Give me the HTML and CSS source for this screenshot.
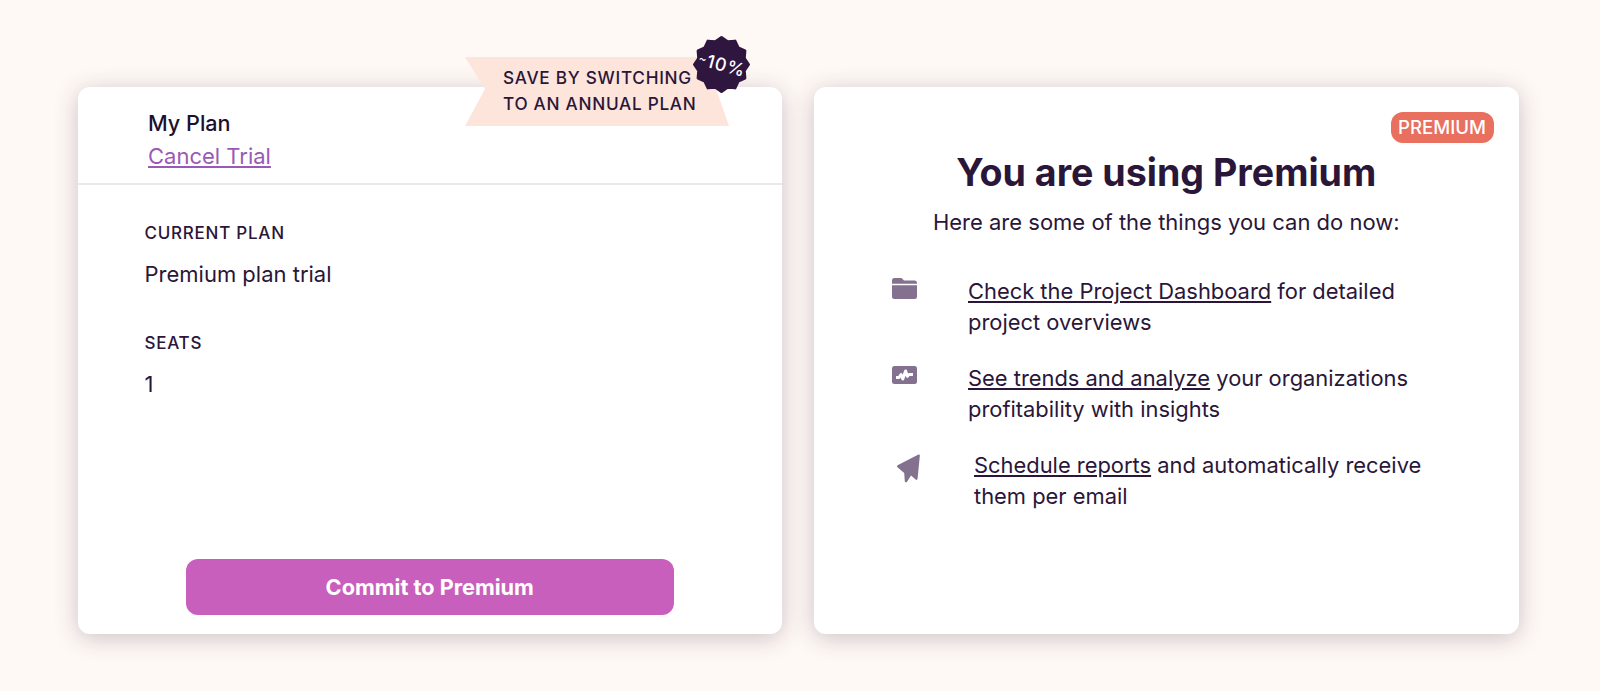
FILE: index.html
```html
<!DOCTYPE html>
<html lang="en">
<head>
<meta charset="utf-8">
<title>Premium plan</title>
<link rel="stylesheet" href="styles.css">
</head>
<body>
<main class="page">
  <section class="card plan">
    <div class="ribbon">
      <svg class="ribbon-bg" viewBox="0 0 264 69" aria-hidden="true"><polygon points="0,0 240,0 264,69 0,69 20,32"/></svg>
      <div class="ribbon-text">SAVE BY SWITCHING<br>TO AN ANNUAL PLAN</div>
      <div class="star">
        <svg viewBox="-30 -30 60 60" aria-hidden="true"><polygon points="0,-27.5 6.2,-23.2 13.8,-23.8 17,-17 23.8,-13.8 23.2,-6.2 27.5,0 23.2,6.2 23.8,13.8 17,17 13.8,23.8 6.2,23.2 0,27.5 -6.2,23.2 -13.8,23.8 -17,17 -23.8,13.8 -23.2,6.2 -27.5,0 -23.2,-6.2 -23.8,-13.8 -17,-17 -13.8,-23.8 -6.2,-23.2"/></svg>
        <span class="star-text"><span class="tilde">~</span>10%</span>
      </div>
    </div>
    <header class="plan-head">
      <div class="plan-title">My Plan</div>
      <a class="cancel" href="#">Cancel Trial</a>
    </header>
    <div class="plan-body">
      <div class="label">CURRENT PLAN</div>
      <div class="value">Premium plan trial</div>
      <div class="label seats">SEATS</div>
      <div class="value">1</div>
    </div>
    <div class="plan-foot"><button class="commit">Commit to Premium</button></div>
  </section>
  <section class="card info">
    <span class="badge">PREMIUM</span>
    <h1>You are using Premium</h1>
    <p class="sub">Here are some of the things you can do now:</p>
    <ul class="list">
      <li class="row">
        <svg class="icon" viewBox="0 0 25 21" aria-hidden="true"><path d="M2.5 0H9.5L12 2.5H22.5A2.5 2.5 0 0 1 25 5V5.8H0V2.5A2.5 2.5 0 0 1 2.5 0ZM0 7.3H25V18.5A2.5 2.5 0 0 1 22.5 21H2.5A2.5 2.5 0 0 1 0 18.5Z"/></svg>
        <div class="row-text"><a href="#">Check the Project Dashboard</a> for detailed project overviews</div>
      </li>
      <li class="row">
        <svg class="icon pulse" viewBox="0 0 25 18" aria-hidden="true"><rect width="25" height="18" rx="2.5"/><polyline class="pulse-line" points="4,11.5 7,11.5 9,8.5 10.8,13 13.6,5 15.4,10.4 17,8.4 21,8.4"/></svg>
        <div class="row-text"><a href="#">See trends and analyze</a> your organizations profitability with insights</div>
      </li>
      <li class="row row-plane">
        <svg class="icon plane" viewBox="0 0 23 29" aria-hidden="true"><path d="M21 .8C22.2 .2 23 1 22.8 2L20.6 24.6C20.4 25.8 19.4 26.2 18.6 25.6L14 21.4 10 27.8C9.2 28.8 8 28.4 7.8 27.2L7.2 19 1 13.8C-.3 12.8-.3 11.6 1 10.9Z"/></svg>
        <div class="row-text"><a href="#">Schedule reports</a> and automatically receive them per email</div>
      </li>
    </ul>
  </section>
</main>
</body>
</html>
```

FILE: styles.css
```css
* { box-sizing: border-box; }
html, body { margin: 0; height: 100%; }
body {
  background: #fff9f5;
  font-family: Inter, "Liberation Sans", sans-serif;
  color: #2a1638;
  overflow: hidden;
}
.page {
  display: flex;
  gap: 32px;
  padding: 87px 81.5px 57px 77.5px;
  height: 691px;
}
.card {
  position: relative;
  flex: 1 1 0;
  height: 547px;
  background: #fff;
  border-radius: 12px;
  box-shadow: 0 4px 24px rgba(42, 22, 56, .24);
}
.plan { display: flex; flex-direction: column; }
.plan-head {
  height: 98px;
  padding: 22px 0 0 70.5px;
  border-bottom: 2px solid #ebe8ed;
}
.plan-title { font-size: 21.6px; font-weight: 500; line-height: 29px; color: #1c1030; }
.cancel { display: block; width: max-content; margin-top: 3px; font-size: 22px; line-height: 30px; color: #9b59b6; }
.plan-body { flex: 1; padding: 37px 0 0 67px; }
.label { font-size: 17px; font-weight: 500; letter-spacing: .75px; line-height: 22px; }
.seats { margin-top: 44.5px; }
.value { margin-top: 17px; font-size: 22px; line-height: 26px; }
.plan-foot { display: flex; justify-content: center; padding-bottom: 19px; }
.commit {
  width: 488px;
  height: 56px;
  border: 0;
  border-radius: 12px;
  background: #c95fbc;
  color: #fff;
  font: 700 21.7px Inter, "Liberation Sans", sans-serif;
}
.ribbon { position: absolute; left: 387.5px; top: -30px; width: 264px; height: 69px; }
.ribbon-bg { display: block; width: 264px; height: 69px; fill: #fde5dc; }
.ribbon-text {
  position: absolute; left: 38px; top: 8px;
  font-size: 17.2px; font-weight: 500; letter-spacing: .72px; line-height: 26px; white-space: nowrap;
}
.star { position: absolute; left: 227px; top: -22px; width: 59px; height: 59px; }
.star svg { display: block; width: 59px; height: 59px; fill: #2f163f; stroke: #2f163f; stroke-width: 3; stroke-linejoin: round; }
.star-text {
  position: absolute; left: 1px; right: 0; top: 18px; text-align: center;
  color: #fff; font-size: 18px; font-weight: 500; letter-spacing: .8px; line-height: 22px;
  transform: rotate(15deg);
}
.tilde { font-size: 12px; vertical-align: 3px; }
.info { padding-top: 62px; text-align: center; }
.badge {
  position: absolute; right: 25px; top: 25px;
  width: 103px; height: 31px; border-radius: 12px;
  background: #e96f5f; color: #fff; font-size: 18.6px; font-weight: 500; line-height: 31px; text-align: center;
}
h1 { margin: 0; font-size: 37.6px; font-weight: 700; line-height: 48px; }
.sub { margin: 10px 0 0; font-size: 22px; line-height: 30px; }
.list { list-style: none; margin: 39px 0 0; padding: 0 0 0 78px; text-align: left; }
.row { display: flex; gap: 51px; margin-bottom: 25px; }
.row-plane { gap: 54px; padding-left: 5px; }
.icon { flex: none; width: 25px; height: 21px; margin-top: 2px; fill: #84708f; }
.icon.pulse { height: 18px; margin-top: 3px; }
.pulse-line { fill: none; stroke: #fff; stroke-width: 3; stroke-linejoin: round; }
.icon.plane { width: 23px; height: 29px; margin-top: 4px; }
.row-text { width: 480px; font-size: 21.9px; line-height: 31px; }
.row-text a { color: inherit; }
```
